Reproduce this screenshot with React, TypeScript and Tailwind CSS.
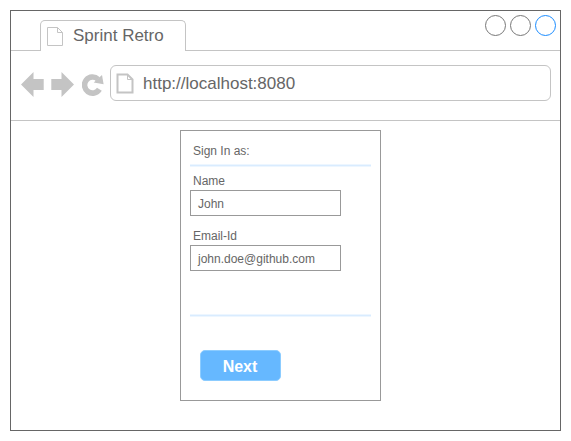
function PageIcon({ className, strokeWidth }: { className: string; strokeWidth: number }) {
  return (
    <svg className={className} viewBox="0 0 18 21" fill="none" stroke="#c4c4c4" strokeWidth={strokeWidth}>
      <path d="M1.5 1.5H11.5L16.5 6.5V19.5H1.5Z" />
      <path d="M11.5 1.5V6.5H16.5" strokeWidth="1" />
    </svg>
  );
}

function Divider() {
  return <div className="h-[3px] w-[181px] border-y border-[#edf6ff] bg-[#d9ecff]" />;
}

function Field({ label, value }: { label: string; value: string }) {
  return (
    <div className="h-[55px]">
      <div className="h-[17px] pl-[3px] pt-px text-xs leading-[14px]">{label}</div>
      <div className="flex h-[26px] w-[151px] items-center border border-[#999999] pl-[7px] pt-[2px] text-xs">{value}</div>
    </div>
  );
}

export default function App() {
  return (
    <div className="h-[441px] w-[571px] bg-white p-[10px] font-['Liberation_Sans',Arial,sans-serif] text-[#666666]">
      <div className="flex h-[421px] w-[551px] flex-col border border-[#666666]">
        <div className="flex h-10">
          <div className="w-[29px] border-b border-[#c4c4c4]" />
          <div className="mt-[9px] flex w-[146px] rounded-t-[5px] border-x border-t border-[#c4c4c4]">
            <PageIcon className="ml-[5px] mt-[5px] h-[21px] w-[18px]" strokeWidth={1} />
            <span className="ml-[9px] mt-[5px] whitespace-nowrap text-[17px] leading-5">Sprint Retro</span>
          </div>
          <div className="flex flex-1 justify-end gap-1 border-b border-[#c4c4c4] pr-1 pt-1">
            <div className="size-[21px] rounded-full border border-[#777777]" />
            <div className="size-[21px] rounded-full border border-[#777777]" />
            <div className="size-[21px] rounded-full border border-[#1a8cff]" />
          </div>
        </div>

        <div className="flex h-[70px] border-b border-[#c4c4c4] pl-[10px] pt-[14px]">
          <svg className="mt-[7px] h-[25px] w-[23px]" viewBox="0 0 23 25" fill="#c4c4c4">
            <path d="M0 12.5L12.5 0V7H22.7V18H12.5V25Z" />
          </svg>
          <svg className="ml-[7px] mt-[7px] h-[25px] w-[23px]" viewBox="0 0 23 25" fill="#c4c4c4">
            <path d="M23 12.5L10.5 0V7H.3V18H10.5V25Z" />
          </svg>
          <svg className="ml-2 mt-[8px] h-[24px] w-[22px]" viewBox="0 0 22 24">
            <path d="M16 6.2A8 8 0 1 0 17.4 16.2" fill="none" stroke="#c4c4c4" strokeWidth="5.6" />
            <path d="M20 2L21.6 11.3L11.7 9.6Z" fill="#c4c4c4" />
          </svg>
          <div className="ml-[6px] flex h-9 w-[441px] items-center rounded-[6px] border border-[#c4c4c4]">
            <PageIcon className="ml-[5px] h-[21px] w-[18px]" strokeWidth={2} />
            <span className="ml-[9px] pt-[2px] text-[17px] leading-5">http://localhost:8080</span>
          </div>
        </div>

        <div className="ml-[169px] mt-[9px] h-[271px] w-[201px] border border-[#999999] px-[9px]">
          <div className="h-[33px] pl-[3px] pt-[13px] text-xs leading-[14px]">Sign In as:</div>
          <Divider />
          <div className="h-[147px] pt-[6px]">
            <Field label="Name" value="John" />
            <Field label="Email-Id" value="john.doe@github.com" />
          </div>
          <Divider />
          <button className="ml-[10px] mt-[33px] flex h-[31px] w-[81px] items-center justify-center rounded-[5px] border border-[#8cccff] bg-[#66b8ff] pr-px pt-[2px] text-base font-bold text-white">
            Next
          </button>
        </div>
      </div>
    </div>
  );
}
